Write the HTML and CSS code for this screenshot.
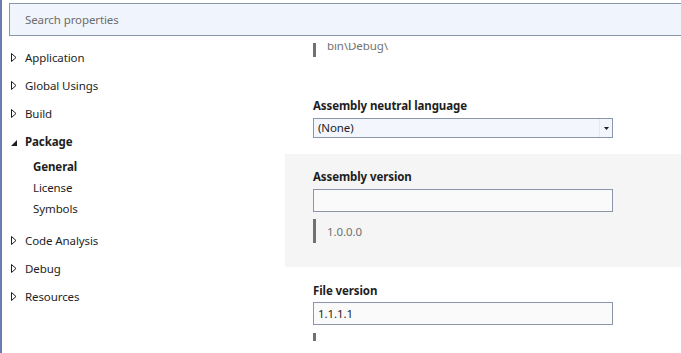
FILE: index.html
```html
<!DOCTYPE html>
<html>
    <head>
        <meta charset="utf-8" />
        <title>Properties</title>
        <link rel="stylesheet" href="styles.css">
    </head>
    <body>
        <div class="search">
            <span class="search__placeholder">Search properties</span>
        </div>
        <div class="main">
            <ul class="nav">
                <li class="nav__item"><svg class="caret" width="6" height="9" viewBox="0 0 6 9"><polygon points="0.5,0.5 5,4.5 0.5,8.5" /></svg>Application</li>
                <li class="nav__item"><svg class="caret" width="6" height="9" viewBox="0 0 6 9"><polygon points="0.5,0.5 5,4.5 0.5,8.5" /></svg>Global Usings</li>
                <li class="nav__item"><svg class="caret" width="6" height="9" viewBox="0 0 6 9"><polygon points="0.5,0.5 5,4.5 0.5,8.5" /></svg>Build</li>
                <li class="nav__item nav__item--open"><svg class="caret caret--open" width="6" height="6" viewBox="0 0 6 6"><polygon points="6,0 6,6 0,6" /></svg>Package</li>
                <li>
                    <ul class="nav__sub">
                        <li class="nav__subitem nav__subitem--active">General</li>
                        <li class="nav__subitem">License</li>
                        <li class="nav__subitem">Symbols</li>
                    </ul>
                </li>
                <li class="nav__item"><svg class="caret" width="6" height="9" viewBox="0 0 6 9"><polygon points="0.5,0.5 5,4.5 0.5,8.5" /></svg>Code Analysis</li>
                <li class="nav__item"><svg class="caret" width="6" height="9" viewBox="0 0 6 9"><polygon points="0.5,0.5 5,4.5 0.5,8.5" /></svg>Debug</li>
                <li class="nav__item"><svg class="caret" width="6" height="9" viewBox="0 0 6 9"><polygon points="0.5,0.5 5,4.5 0.5,8.5" /></svg>Resources</li>
            </ul>
            <div class="panel">
                <div class="section section--top">
                    <div class="hint hint--clipped">bin\Debug\</div>
                </div>
                <div class="section section--plain">
                    <div class="section__label">Assembly neutral language</div>
                    <div class="select">
                        <span class="select__value">(None)</span>
                        <span class="select__button"><svg width="5" height="3" viewBox="0 0 5 3"><polygon points="0,0 5,0 2.5,3" /></svg></span>
                    </div>
                </div>
                <div class="section section--shaded">
                    <div class="section__label">Assembly version</div>
                    <div class="textbox"></div>
                    <div class="hint">1.0.0.0</div>
                </div>
                <div class="section section--last">
                    <div class="section__label">File version</div>
                    <div class="textbox">1.1.1.1</div>
                    <div class="hint hint--empty"></div>
                </div>
            </div>
        </div>
    </body>
</html>
```

FILE: styles.css
```css
*,*::before,*::after{
    box-sizing: border-box;
}
html,body{
    height:100%;
}
body{
    margin:0;
    padding:0;
    border-left:2px solid #6b7db0;
    background:#ffffff;
    font-family:'Segoe UI','Noto Sans',sans-serif;
    font-size:11.5px;
    letter-spacing:-0.1px;
    color:#1e1e1e;
    overflow:hidden;
}
.search{
    margin:3px 0 0 7px;
    height:33px;
    border:1px solid #8b96a8;
    border-right:none;
    background:#f0f4fc;
    display:flex;
    align-items:center;
    padding-left:15px;
}
.search__placeholder{
    color:#6d6d6d;
}
.main{
    display:flex;
}
.nav{
    list-style:none;
    margin:0;
    padding:7px 0 0 0;
    width:283px;
    flex-shrink:0;
}
.nav__item{
    height:28px;
    display:flex;
    align-items:center;
    padding-left:9px;
}
.caret{
    width:6px;
    margin-right:8px;
    fill:none;
    stroke:#1e1e1e;
    stroke-width:1;
}
.caret--open{
    fill:#1e1e1e;
    stroke:none;
    margin-top:4px;
}
.nav__item--open{
    font-weight:bold;
}
.nav__sub{
    list-style:none;
    margin:0;
    padding:1px 0 7px 31px;
}
.nav__subitem{
    height:21px;
    display:flex;
    align-items:center;
}
.nav__subitem--active{
    font-weight:bold;
}
.panel{
    flex-grow:1;
    margin-top:7px;
    overflow:hidden;
}
.section{
    padding:15px 28px 24px;
}
.section--top{
    padding-top:0;
    padding-bottom:26px;
}
.section--plain{
    padding-bottom:16px;
}
.section--shaded{
    background:#f5f5f5;
}
.section--last{
    padding-top:16px;
    padding-bottom:0;
}
.section__label{
    font-weight:bold;
    line-height:16px;
    height:16px;
    margin-bottom:4px;
}
.section--last .section__label{
    margin-bottom:3px;
}
.textbox{
    width:300px;
    height:23px;
    border:1px solid #8b96a8;
    background:#fafafa;
    padding-left:4px;
    line-height:21px;
}
.select{
    width:300px;
    height:20px;
    border:1px solid #8b96a8;
    background:#f3f6fc;
    display:flex;
}
.select__value{
    flex-grow:1;
    padding-left:4px;
    line-height:18px;
}
.select__button{
    width:13px;
    border-left:1px solid #e4e8f0;
    display:flex;
    align-items:center;
    justify-content:center;
    fill:#1e1e1e;
}
.hint{
    margin-top:7px;
    height:24px;
    border-left:3px solid #717171;
    padding-left:11px;
    color:#717171;
    line-height:25px;
}
.hint--clipped{
    margin-top:-10px;
}
.hint--empty{
    margin-top:8px;
    height:8px;
}
```
